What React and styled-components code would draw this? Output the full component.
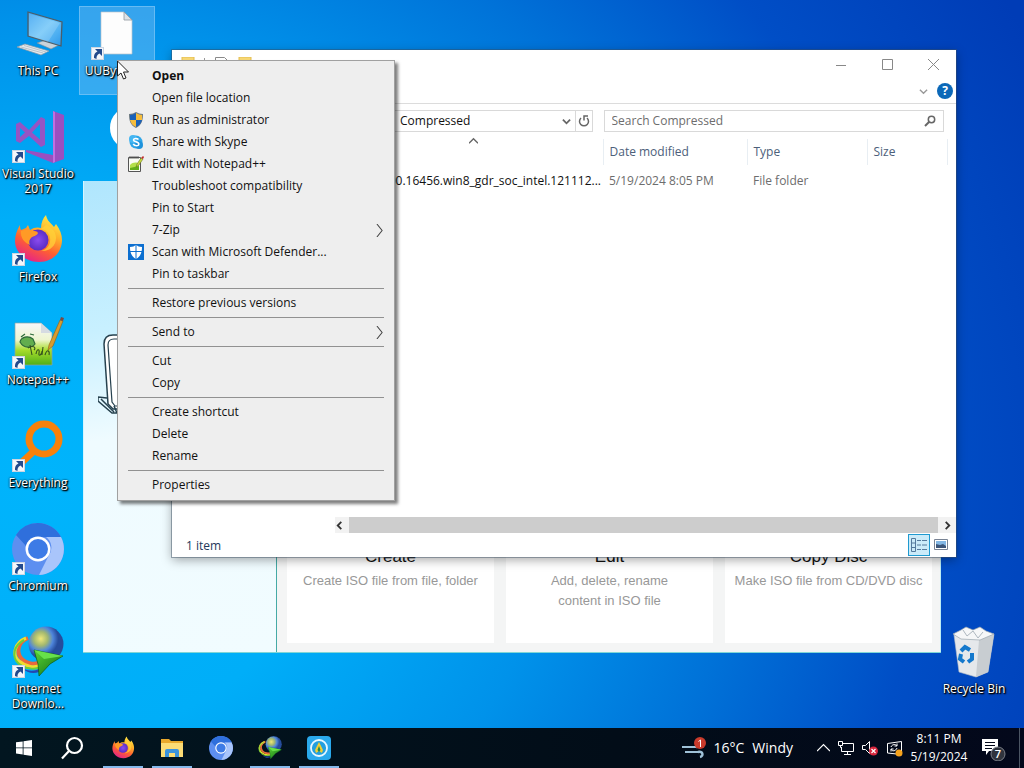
import styled, { createGlobalStyle, css } from "styled-components";

const GlobalStyle = createGlobalStyle`
  * {
    box-sizing: border-box;
  }
  body {
    margin: 0;
    overflow: hidden;
    font-family: "Open Sans", "Noto Sans", sans-serif;
    font-size: 12px;
    line-height: 16px;
    color: #111;
  }
  button {
    padding: 0;
    border: 0;
    background: none;
    font: inherit;
    color: inherit;
    cursor: default;
  }
  svg {
    display: block;
    flex: none;
  }
`;

/* ---------- icons ---------- */

const ThisPcIcon = () => (
  <svg viewBox="0 0 52 52" width="52" height="52">
    <defs>
      <linearGradient id="pcScreen" x1="0" y1="0" x2="1" y2="1">
        <stop offset="0" stopColor="#2f9df0" />
        <stop offset="0.5" stopColor="#6cc4f8" />
        <stop offset="1" stopColor="#2c98ea" />
      </linearGradient>
    </defs>
    <path d="M25 35l9-3 13 5-8 4z" fill="#c9d3da" stroke="#7d8c96" strokeWidth=".6" />
    <path d="M16 4l34 10-1 24-33-10z" fill="url(#pcScreen)" stroke="#4c5d69" strokeWidth="1.3" />
    <path d="M17 5.500l31 9.500-12 19-19-6z" fill="#fff" opacity=".18" />
    <path d="M5 39l8-3 24 7-8 4z" fill="#e3e8ec" stroke="#8a98a3" strokeWidth=".7" />
    <path d="M9 39l22 6M12 37.500l22 6.500" stroke="#a6b1b9" strokeWidth=".7" />
  </svg>
);

const PageIcon = () => (
  <svg viewBox="0 0 52 52" width="52" height="52">
    <path d="M10 4h23l8 8v34H10z" fill="#fdfdfd" stroke="#b9c3cc" strokeWidth=".7" />
    <path d="M33 4v8h8z" fill="#dfe3e6" stroke="#8f989f" strokeWidth=".8" />
  </svg>
);

const VisualStudioIcon = () => (
  <svg viewBox="0 0 52 52" width="52" height="52">
    <path d="M41 0l11 4v44l-11 4-27-11v-2l27 5z" fill="#9a4fc0" />
    <path d="M41 0l2 1v50l-2 1z" fill="#c06fe0" />
    <path
      d="M4 13l4-2 9 8L29 6l4 2v26l-4 2-12-11-9 7-4-2zM8 17v9l5-4.500zM28 13l-8 8.500 8 7z"
      fill="#9455c4"
      fillRule="evenodd"
    />
  </svg>
);

const FirefoxIcon = ({ size = 52 }) => (
  <svg viewBox="0 0 52 52" width={size} height={size}>
    <defs>
      <linearGradient id="fxBody" x1=".8" y1="0" x2=".3" y2="1">
        <stop offset="0" stopColor="#fff04a" />
        <stop offset=".35" stopColor="#ffb22a" />
        <stop offset=".65" stopColor="#ff6130" />
        <stop offset="1" stopColor="#e5218a" />
      </linearGradient>
      <radialGradient id="fxGlobe">
        <stop offset="0" stopColor="#8a4bf0" />
        <stop offset="1" stopColor="#5a2cc4" />
      </radialGradient>
    </defs>
    <path
      d="M8 11c0 3 .5 4 1 5l5-2 2-3 2 5c4-3 8-3 11-2 0-5 2-10 5-13 1 6 5 8 8 12l2-3c4 5 6 11 6 16 0 12-9 22-23 22S3 38 3 27c0-6 2-11 5-16z"
      fill="url(#fxBody)"
    />
    <circle cx="26" cy="26" r="10.500" fill="url(#fxGlobe)" />
    <path d="M9 17c4-2 8-2 11 0 3 0 5 0 6 2-1 3-5 3-7 5-3 3-1 7-1 7-5-2-10-7-9-14z" fill="#ff9a26" />
    <path d="M29 15c7 1 10 7 9 13-1 5-5 8-9 9 8 1 15-5 15-13 0-7-5-11-10-13z" fill="#ffd23a" opacity=".75" />
  </svg>
);

const NotepadIcon = ({ size = 52 }) => (
  <svg viewBox="0 0 52 52" width={size} height={size}>
    <defs>
      <linearGradient id="nppPage" x1="0" y1="0" x2="0" y2="1">
        <stop offset="0" stopColor="#f7f7fa" />
        <stop offset=".4" stopColor="#eef5cf" />
        <stop offset=".65" stopColor="#a6dc2b" />
        <stop offset="1" stopColor="#4fae18" />
      </linearGradient>
    </defs>
    <path d="M3 6h26l11 10v32H3z" fill="url(#nppPage)" stroke="#8ea3a3" strokeWidth=".7" />
    <path d="M29 6v10h11z" fill="#d6dbe2" />
    <path d="M8 25c1-5 8-7 13-3l2 5c-3 4-11 5-15-2zM9 20l4-3M18 17l4 1" fill="#62ad4e" stroke="#2d6a3a" strokeWidth="1.200" />
    <path
      d="M18 28l2 10M16 31c4-3 9-1 6 2M24 37c1-6 4-5 3-1s3 2 3-2M31 30l-1 8M33 38c2-7 5-4 4 0"
      fill="none"
      stroke="#34521f"
      strokeWidth="1.100"
    />
    <path d="M36 33l1-5L48 3l3 1-10 25z" fill="#d79b2f" stroke="#8b6018" strokeWidth=".6" />
    <path d="M48 3l1-3 3 1-1 3z" fill="#7b4a44" />
  </svg>
);

const EverythingIcon = () => (
  <svg viewBox="0 0 52 52" width="52" height="52" fill="none" stroke="#f8810b">
    <circle cx="32" cy="19" r="15" strokeWidth="7" />
    <path d="M22 31L8 44" strokeWidth="7" />
  </svg>
);

const ChromiumIcon = ({ size = 52 }) => (
  <svg viewBox="0 0 52 52" width={size} height={size}>
    <circle cx="26" cy="26" r="26" fill="#5d8ff0" />
    <path d="M26 0a26 26 0 0 1 23 14H26a13 13 0 0 0-12 9L4 12A26 26 0 0 1 26 0z" fill="#2f6fdc" />
    <path d="M49 14a26 26 0 0 1-22 38l10-20a13 13 0 0 0-3-18z" fill="#a9c5fb" />
    <circle cx="26" cy="26" r="12.500" fill="#fff" />
    <circle cx="26" cy="26" r="10" fill="#3d7be6" />
  </svg>
);

const IdmIcon = ({ size = 52 }) => (
  <svg viewBox="0 0 52 52" width={size} height={size}>
    <defs>
      <radialGradient id="idmGlobe" cx=".35" cy=".35">
        <stop offset="0" stopColor="#f0e878" />
        <stop offset=".4" stopColor="#a3b870" />
        <stop offset=".7" stopColor="#4f86dc" />
        <stop offset="1" stopColor="#264c9c" />
      </radialGradient>
      <linearGradient id="idmArrow" x1="0" y1="0" x2="1" y2="1">
        <stop offset="0" stopColor="#5cd433" />
        <stop offset="1" stopColor="#0c6b18" />
      </linearGradient>
    </defs>
    <path d="M16 12C6 16 4 26 9 32s14 7 20 4" fill="none" stroke="#e8693c" strokeWidth="4" />
    <path d="M14 12C2 17 0 29 7 35s16 7 22 4" fill="none" stroke="#f2dc2e" strokeWidth="3" />
    <path d="M12 14C1 20 0 31 6 37s17 7 23 4" fill="none" stroke="#6fce3a" strokeWidth="2" />
    <path d="M10 42c7 4 14 3 19 0l-2 4c-6 2-12 1-17-4z" fill="#2446b0" />
    <circle cx="34" cy="18" r="17.500" fill="url(#idmGlobe)" />
    <path d="M22 24l29 6-13 8-11 12-1-12z" fill="url(#idmArrow)" stroke="#0c5a18" strokeWidth=".7" />
    <path d="M22 24l29 6-19 3z" fill="#67e04a" />
  </svg>
);

const RecycleBinIcon = () => (
  <svg viewBox="0 0 52 52" width="52" height="52">
    <path d="M6 9l40-1-6 38-12 5-17-5z" fill="#e5e8eb" stroke="#b5bdc6" strokeWidth=".6" />
    <path d="M31 14l15-6-6 38-12 5z" fill="#c8cdd1" />
    <path d="M5 8l8-4 5-3 7 3 7-3 6 4 8 3-14 6-19-1z" fill="#f6f7f8" stroke="#9aa5ae" strokeWidth=".7" />
    <path d="M15 4l4 6 6-5 5 7 5-6" fill="none" stroke="#aeb7bf" />
    <path d="M13 25l4-4 5 3M24 27l0 6-4 3M16 36l-4-3 1-5" fill="none" stroke="#1478cc" strokeWidth="4" />
  </svg>
);

const IsoEditorIcon = () => (
  <svg viewBox="0 0 24 24" width="24" height="24">
    <rect width="24" height="24" rx="4" fill="#2aa9ec" />
    <circle cx="12" cy="12" r="8" fill="#239fdf" stroke="#e9f8ff" strokeWidth="1.800" />
    <path d="M12 6l4 8-1 3-3-2-3 2-1-3z" fill="#f2cf32" />
    <path d="M12 10l1.500 4-1.500 2-1.500-2z" fill="#23874c" />
  </svg>
);

const FolderIcon = () => (
  <svg viewBox="0 0 24 24" width="24" height="24">
    <path d="M1 3h8l2 2h12v16H1z" fill="#e9a92c" />
    <path d="M1 7h22v14H1z" fill="#fcdc75" />
    <path d="M5 21v-6a2 2 0 0 1 2-2h10a2 2 0 0 1 2 2v6h-4v-4H9v4z" fill="#3c93dc" />
  </svg>
);

const SmallFolderIcon = () => (
  <svg viewBox="0 0 16 16" width="16" height="16">
    <path d="M2 0h12v15H2z" fill="#f7d774" stroke="#e3bd50" />
  </svg>
);

const SmallPageIcon = () => (
  <svg viewBox="0 0 16 16" width="16" height="16">
    <path d="M2.500.500h9l3 3v11h-12z" fill="#fff" stroke="#8a8a8a" />
  </svg>
);

const ShieldIcon = () => (
  <svg viewBox="0 0 16 16" width="16" height="16">
    <path d="M8 0c2 1 4 2 7 2 0 6-1 11-7 14C2 13 1 8 1 2c3 0 5-1 7-2z" fill="#6e7b84" />
    <path d="M8 1v7H2V3c2 0 4-1 6-2z" fill="#1b62b8" />
    <path d="M8 1c2 1 4 2 6 2v5H8z" fill="#f6bd3d" />
    <path d="M2 8h6v7C4 13 3 11 2 8z" fill="#f6bd3d" />
    <path d="M14 8H8v7c4-2 5-4 6-7z" fill="#1b62b8" />
  </svg>
);

const SkypeIcon = () => (
  <svg viewBox="0 0 16 16" width="16" height="16">
    <circle cx="8" cy="8" r="6.500" fill="#2fa6e8" />
    <circle cx="5" cy="5" r="4" fill="#45b6f2" />
    <circle cx="11" cy="11" r="4" fill="#1f93dc" />
    <path
      d="M10.500 5.500C9 4 5.500 4 5.500 6S10.800 7.500 10.800 10 6.500 12 5.200 10"
      fill="none"
      stroke="#fff"
      strokeWidth="1.600"
    />
  </svg>
);

const NotepadSmallIcon = () => (
  <svg viewBox="0 0 16 16" width="16" height="16">
    <path d="M.500 1.500h12v14H.500z" fill="#fafcf5" stroke="#555" />
    <path d="M2 9c3-3 7-3 9-1v6H2z" fill="#b3e04a" />
    <path d="M2 12l9-2v4H2z" fill="#63ae1a" />
    <path d="M2 0v3M4 0v3M6 0v3M8 0v3M10 0v3" stroke="#444" strokeWidth=".8" />
    <path d="M8 11l1-3 4-6 2 1-4 6z" fill="#c9d943" stroke="#566418" strokeWidth=".5" />
    <path d="M13 2l2-2 1 1-1 2z" fill="#c02a2a" />
  </svg>
);

const DefenderIcon = () => (
  <svg viewBox="0 0 16 16" width="16" height="16">
    <path d="M0 0h16v16H0z" fill="#0c6fd0" />
    <path d="M8 1c2 1 3 2 6 2 0 5-1 9-6 12-5-3-6-7-6-12 3 0 4-1 6-2z" fill="#fff" />
    <path d="M8 1v14M2 7.500h12" stroke="#0c6fd0" />
  </svg>
);

const Chevron = ({ d, width = 9, height = 9, color = "#666", weight = 1.5 }) => (
  <svg viewBox="0 0 10 10" width={width} height={height} fill="none" stroke={color} strokeWidth={weight}>
    <path d={d} />
  </svg>
);
const DOWN = "M1 3l4 4 4-4";
const UP = "M0 7l5-5 5 5";
const LEFT = "M7 1L3 5l4 4";
const RIGHT = "M3 1l4 4-4 4";

const LaptopArt = () => (
  <svg viewBox="0 0 60 90" width="60" height="90" fill="none" stroke="#26414f">
    <path d="M60 2H15C9 2 6 5 6 11l4 60 5 5h45" fill="#fff" strokeWidth="1.500" />
    <path d="M60 6H16c-4 0-6 2-6 6l4 57 3 4h43" strokeWidth="1.200" />
    <path d="M9 65l-9-1v4l14 12h5l-3-7M3 66l13 13M20 81v5h40" strokeWidth="1.500" />
  </svg>
);

/* ---------- desktop ---------- */

const Screen = styled.div`
  display: flex;
  flex-direction: column;
  height: 100vh;
`;

const Desktop = styled.main`
  position: relative;
  flex: 1;
  min-height: 0;
  overflow: hidden;
  background: radial-gradient(
    ellipse 120% 150% at 4% 66%,
    #00b4fc 0%,
    #00aef8 24%,
    #0092ea 42%,
    #0072d8 57%,
    #004ec6 72%,
    #003cb6 90%
  );
`;

const Shortcuts = styled.div`
  display: flex;
  flex-direction: column;
  gap: 14px;
  width: 76px;
  padding-top: 6px;
`;

const DesktopIcon = styled.button`
  display: flex;
  flex-direction: column;
  align-items: center;
  width: 76px;
  height: 89px;
  padding-top: 2px;
  line-height: 15px;
  color: #fff;
  text-shadow: 1px 1px 1px #000, 1px 1px 2px #000, 0 0 2px #000;
  ${(props) =>
    props.$selected &&
    css`
      background: rgba(120, 190, 245, 0.45);
      box-shadow: inset 0 0 0 1px rgba(150, 210, 250, 0.5);
    `}
`;

const IconArt = styled.span`
  position: relative;
  display: block;
  margin-bottom: 3px;
`;

const ShortcutBadge = styled.span`
  position: absolute;
  left: 0;
  bottom: 0;
  width: 13px;
  height: 13px;
  background: #f4f6fa;
  border: 1px solid #cdd6e2;
`;

const FloatingIcon = styled.div`
  position: absolute;
  ${(props) => props.$place}
`;

const Launcher = ({ label, icon, selected, shortcut = true }) => (
  <DesktopIcon $selected={selected}>
    <IconArt>
      {icon}
      {shortcut && (
        <ShortcutBadge>
          <svg viewBox="0 0 11 11" width="11" height="11">
            <path d="M3 1h7v7L7.500 5.500C5 7 4.500 8 4.500 11L2 10c0-4 1-5.500 3.500-6.500z" fill="#234a8c" />
          </svg>
        </ShortcutBadge>
      )}
    </IconArt>
    {label}
  </DesktopIcon>
);

/* ---------- ISO editor window ---------- */

const EditorWindow = styled.section`
  position: absolute;
  inset: 95px 83px 75px 83px;
  display: flex;
  flex-direction: column;
  font-family: "Liberation Sans", Arial, sans-serif;
`;

const EditorHeader = styled.header`
  display: flex;
  align-items: center;
  height: 86px;
  padding: 0 27px 20px;
`;

const EditorLogo = styled.span`
  width: 44px;
  height: 44px;
  border: 7px solid #fff;
  border-radius: 50%;
  background: #27a58c;
`;

const EditorBody = styled.div`
  display: flex;
  flex: 1;
  border-bottom: 1px solid #7fd6d6;
`;

const EditorSide = styled.div`
  width: 194px;
  padding: 152px 14px 0;
  border-left: 1px solid #d3f5ff;
  border-right: 1px solid #45aaa6;
  background: linear-gradient(170deg, #b0e6fd 0%, #c8f0ff 30%, #effbff 52%, #f1fcff 100%);
`;

const Cards = styled.div`
  display: flex;
  flex: 1;
  gap: 12px;
  padding: 10px 8px 9px 10px;
  background: #f4f5f5;
  border-right: 1px solid #bdeef5;
`;

const Card = styled.article`
  display: flex;
  flex: 1;
  flex-direction: column;
  justify-content: flex-end;
  background: #fff;
  text-align: center;
  h2 {
    margin: 0;
    font-size: 17px;
    line-height: 24px;
    font-weight: 400;
    color: #111;
  }
  p {
    min-height: 74px;
    margin: 0;
    padding: 2px 8px 0;
    font-size: 13px;
    line-height: 20px;
    color: #989898;
  }
`;

/* ---------- explorer window ---------- */

const ExplorerWindow = styled.section`
  position: absolute;
  inset: 50px 68px 171px 172px;
  display: flex;
  flex-direction: column;
  background: #fff;
  box-shadow: 0 0 0 1px rgba(60, 80, 100, 0.45), 0 3px 10px rgba(0, 0, 0, 0.35);
`;

const TitleBar = styled.header`
  display: flex;
  justify-content: space-between;
  height: 29px;
`;

const QuickAccess = styled.div`
  display: flex;
  align-items: center;
  gap: 8px;
  padding-left: 8px;
  span {
    height: 14px;
    border-left: 1px solid #999;
  }
`;

const WindowButton = styled.button`
  display: inline-flex;
  align-items: center;
  justify-content: center;
  width: 46px;
  height: 29px;
`;

const RibbonBar = styled.div`
  display: flex;
  align-items: center;
  justify-content: flex-end;
  gap: 9px;
  height: 25px;
  padding-right: 3px;
  border-bottom: 1px solid #dcdcdc;
  button {
    display: flex;
  }
`;

const HelpButton = styled.button`
  align-items: center;
  justify-content: center;
  width: 16px;
  height: 16px;
  border-radius: 50%;
  background: #0b68b8;
  color: #fff;
  font-weight: 700;
`;

const AddressRow = styled.div`
  display: grid;
  grid-template-columns: 1fr 1fr;
  gap: 11px;
  height: 35px;
  padding: 6px 12px 6px 80px;
`;

const AddressBox = styled.div`
  display: flex;
  align-items: stretch;
  height: 22px;
  padding-left: 147px;
  border: 1px solid #d9d9d9;
  span {
    flex: 1;
    line-height: 20px;
  }
  button {
    display: flex;
    align-items: center;
    justify-content: center;
    width: 17px;
  }
  button:last-child {
    border-left: 1px solid #d9d9d9;
  }
`;

const SearchBox = styled.label`
  display: flex;
  align-items: center;
  height: 22px;
  padding: 0 7px;
  border: 1px solid #d9d9d9;
  input {
    flex: 1;
    min-width: 0;
    padding: 0;
    border: 0;
    outline: 0;
    background: none;
    font: inherit;
  }
  input::placeholder {
    color: #6d6d6d;
    opacity: 1;
  }
`;

const Panes = styled.div`
  display: flex;
  flex: 1;
  min-height: 0;
`;

const NavPane = styled.nav`
  width: 163px;
`;

const FilePane = styled.div`
  display: flex;
  flex: 1;
  flex-direction: column;
  justify-content: space-between;
`;

const FileTable = styled.table`
  width: 100%;
  table-layout: fixed;
  border-collapse: collapse;
  white-space: nowrap;
  th,
  td {
    padding: 0 6px;
    font-weight: 400;
    text-align: left;
  }
  th {
    position: relative;
    height: 26px;
    border-right: 1px solid #e8eef3;
    color: #4c607a;
  }
  th:last-child {
    border: 0;
  }
  td {
    height: 32px;
    color: #6d6d6d;
  }
  td:first-child {
    padding-right: 2px;
    text-align: right;
    color: #111;
  }
`;

const SortMark = styled.span`
  position: absolute;
  top: -2px;
  left: 50%;
`;

const ScrollBar = styled.div`
  display: flex;
  height: 16px;
  background: #f2f2f2;
  button {
    display: flex;
    align-items: center;
    justify-content: center;
    width: 18px;
  }
  button:first-child {
    justify-content: flex-start;
    width: 14px;
  }
`;

const ScrollThumb = styled.div`
  flex: 1;
  background: #cdcdcd;
`;

const StatusBar = styled.footer`
  display: flex;
  align-items: center;
  height: 24px;
  padding: 0 4px 0 14px;
  color: #1e395b;
  span {
    flex: 1;
    padding-top: 2px;
  }
`;

const ViewButton = styled.button`
  display: flex;
  align-items: center;
  justify-content: center;
  width: 22px;
  height: 22px;
  ${(props) =>
    props.$active &&
    css`
      border: 1px solid #1f9ad0;
      background: #cbebf9;
    `}
`;

/* ---------- context menu ---------- */

const Menu = styled.div`
  position: absolute;
  left: 117px;
  top: 60px;
  width: 278px;
  padding: 4px 0;
  border: 1px solid #a0a0a0;
  background: #eee;
  box-shadow: 3px 3px 3px rgba(0, 0, 0, 0.5);
`;

const MenuItem = styled.button`
  display: flex;
  align-items: center;
  width: 100%;
  height: 22px;
  padding: 0 8px 0 10px;
  font-weight: ${(props) => (props.$bold ? 700 : 400)};
  text-align: left;
`;

const MenuIcon = styled.span`
  width: 16px;
  margin-right: 8px;
`;

const MenuText = styled.span`
  flex: 1;
`;

const MenuLine = styled.hr`
  height: 1px;
  margin: 3px 10px;
  border: 0;
  background: #919191;
`;

const Cursor = styled.svg`
  position: absolute;
  left: 117px;
  top: 60px;
`;

const menuGroups = [
  [
    { label: "Open", bold: true },
    { label: "Open file location" },
    { label: "Run as administrator", icon: <ShieldIcon /> },
    { label: "Share with Skype", icon: <SkypeIcon /> },
    { label: "Edit with Notepad++", icon: <NotepadSmallIcon /> },
    { label: "Troubleshoot compatibility" },
    { label: "Pin to Start" },
    { label: "7-Zip", submenu: true },
    { label: "Scan with Microsoft Defender...", icon: <DefenderIcon /> },
    { label: "Pin to taskbar" },
  ],
  [{ label: "Restore previous versions" }],
  [{ label: "Send to", submenu: true }],
  [{ label: "Cut" }, { label: "Copy" }],
  [{ label: "Create shortcut" }, { label: "Delete" }, { label: "Rename" }],
  [{ label: "Properties" }],
];

function ContextMenu() {
  return (
    <Menu role="menu">
      {menuGroups.map((group, index) => (
        <div key={group[0].label}>
          {index > 0 && <MenuLine />}
          {group.map((item) => (
            <MenuItem key={item.label} role="menuitem" $bold={item.bold}>
              <MenuIcon>{item.icon}</MenuIcon>
              <MenuText>{item.label}</MenuText>
              {item.submenu && <Chevron d="M3 0l4 5-4 5" width={13} height={13} color="#444" weight={0.8} />}
            </MenuItem>
          ))}
        </div>
      ))}
    </Menu>
  );
}

/* ---------- taskbar ---------- */

const TaskBar = styled.footer`
  display: flex;
  justify-content: space-between;
  height: 40px;
  background: linear-gradient(90deg, #021620, #020d18 60%, #03081b);
  color: #fff;
`;

const TaskGroup = styled.div`
  display: flex;
  align-items: stretch;
`;

const RunningApps = styled.div`
  display: flex;
  gap: 9px;
  padding-left: 7px;
`;

const TaskButton = styled.button`
  display: flex;
  align-items: center;
  justify-content: center;
  width: 48px;
`;

const AppButton = styled(TaskButton)`
  width: 40px;
  border-bottom: 2px solid ${(props) => (props.$running ? "#86b9ec" : "transparent")};
  padding-top: 2px;
`;

const Weather = styled.button`
  display: flex;
  align-items: center;
  gap: 8px;
  margin-right: 24px;
  font-size: 14px;
`;

const TrayIcons = styled.div`
  display: flex;
  align-items: center;
  gap: 8px;
  button {
    display: flex;
  }
`;

const Clock = styled.button`
  width: 72px;
  line-height: 18px;
`;

const ActionCenter = styled.button`
  display: flex;
  align-items: center;
  padding: 0 12px 0 7px;
  border-right: 1px solid #4b5563;
  margin-right: 4px;
`;

const launchers = [
  { label: "This PC", icon: <ThisPcIcon />, shortcut: false },
  { label: "Visual Studio 2017", icon: <VisualStudioIcon /> },
  { label: "Firefox", icon: <FirefoxIcon /> },
  { label: "Notepad++", icon: <NotepadIcon /> },
  { label: "Everything", icon: <EverythingIcon /> },
  { label: "Chromium", icon: <ChromiumIcon /> },
  { label: "Internet Downlo...", icon: <IdmIcon /> },
];

const tasks = [
  { name: "Firefox", icon: <FirefoxIcon size={24} />, running: true },
  { name: "File Explorer", icon: <FolderIcon />, running: true },
  { name: "Chromium", icon: <ChromiumIcon size={24} /> },
  { name: "Internet Download Manager", icon: <IdmIcon size={24} />, running: true },
  { name: "ISO Editor", icon: <IsoEditorIcon />, running: true },
];

function Editor() {
  return (
    <EditorWindow>
      <EditorHeader>
        <EditorLogo />
      </EditorHeader>
      <EditorBody>
        <EditorSide>
          <LaptopArt />
        </EditorSide>
        <Cards>
          <Card>
            <h2>Create</h2>
            <p>Create ISO file from file, folder</p>
          </Card>
          <Card>
            <h2>Edit</h2>
            <p>
              Add, delete, rename
              <br />
              content in ISO file
            </p>
          </Card>
          <Card>
            <h2>Copy Disc</h2>
            <p>Make ISO file from CD/DVD disc</p>
          </Card>
        </Cards>
      </EditorBody>
    </EditorWindow>
  );
}

function Explorer() {
  return (
    <ExplorerWindow>
      <TitleBar>
        <QuickAccess>
          <SmallFolderIcon />
          <span />
          <SmallPageIcon />
          <SmallFolderIcon />
        </QuickAccess>
        <div>
          <WindowButton aria-label="Minimize">
            <svg width="11" height="11" stroke="#888">
              <path d="M0 6.500h10" />
            </svg>
          </WindowButton>
          <WindowButton aria-label="Maximize">
            <svg width="11" height="11" fill="none" stroke="#888">
              <path d="M.500.500h10v10H.500z" />
            </svg>
          </WindowButton>
          <WindowButton aria-label="Close">
            <svg width="11" height="11" stroke="#888">
              <path d="M0 0l11 11M11 0L0 11" />
            </svg>
          </WindowButton>
        </div>
      </TitleBar>
      <RibbonBar>
        <button aria-label="Expand the ribbon">
          <Chevron d={DOWN} color="#999" />
        </button>
        <HelpButton>?</HelpButton>
      </RibbonBar>
      <AddressRow>
        <AddressBox>
          <span>Compressed</span>
          <button aria-label="Previous locations">
            <Chevron d={DOWN} weight={2} />
          </button>
          <button aria-label="Refresh">
            <svg viewBox="0 0 12 12" width="12" height="12" fill="none" stroke="#666" strokeWidth="1.500">
              <path d="M3 3a4.500 4.500 0 1 0 6 0M6 5.500V1h4" />
            </svg>
          </button>
        </AddressBox>
        <SearchBox>
          <input type="text" placeholder="Search Compressed" aria-label="Search Compressed" />
          <svg viewBox="0 0 12 12" width="12" height="12" fill="none" stroke="#666">
            <circle cx="7.500" cy="4.500" r="3.200" strokeWidth="1.500" />
            <path d="M5 7L1 11" strokeWidth="2" />
          </svg>
        </SearchBox>
      </AddressRow>
      <Panes>
        <NavPane />
        <FilePane>
          <FileTable>
            <colgroup>
              <col />
              <col width="144" />
              <col width="120" />
              <col width="80" />
              <col width="9" />
            </colgroup>
            <thead>
              <tr>
                <th>
                  Name
                  <SortMark>
                    <Chevron d={UP} />
                  </SortMark>
                </th>
                <th>Date modified</th>
                <th>Type</th>
                <th>Size</th>
                <th />
              </tr>
            </thead>
            <tbody>
              <tr>
                <td>200.16456.win8_gdr_soc_intel.121112...</td>
                <td>5/19/2024 8:05 PM</td>
                <td>File folder</td>
                <td />
                <td />
              </tr>
            </tbody>
          </FileTable>
          <ScrollBar>
            <button aria-label="Scroll left">
              <Chevron d={LEFT} color="#333" weight={2} />
            </button>
            <ScrollThumb />
            <button aria-label="Scroll right">
              <Chevron d={RIGHT} color="#333" weight={2} />
            </button>
          </ScrollBar>
        </FilePane>
      </Panes>
      <StatusBar>
        <span>1 item</span>
        <ViewButton $active aria-label="Details view">
          <svg viewBox="0 0 16 14" width="16" height="14" fill="none" stroke="#557a9c">
            <path d="M.500.500h4v13h-4zM.500 5h4M.500 9.500h4" />
            <path d="M6 2.500h4M11 2.500h5M6 7h4M11 7h5M6 11.500h4M11 11.500h5" />
          </svg>
        </ViewButton>
        <ViewButton aria-label="Large icons view">
          <svg viewBox="0 0 14 12" width="14" height="12">
            <path d="M.500.500h13v10H.500z" fill="#fff" stroke="#788394" />
            <path d="M2 2h10v7H2z" fill="#83b7e4" />
            <path d="M2 5l4 1 3-1 3 2v2H2z" fill="#3c5578" />
          </svg>
        </ViewButton>
      </StatusBar>
    </ExplorerWindow>
  );
}

function Tray() {
  return (
    <TaskGroup>
      <Weather>
        <svg viewBox="0 0 24 22" width="24" height="22">
          <path d="M0 10h15M3 15h15" stroke="#9fc2d8" strokeWidth="2" />
          <path d="M14 10c5 0 5-5 2-5M16 15c5-1 6 4 2 5" fill="none" stroke="#9fc2d8" strokeWidth="2.500" />
          <circle cx="18" cy="6" r="6" fill="#c93b2c" />
          <path d="M16.500 4.500L18.500 3v7" fill="none" stroke="#fff" />
        </svg>
        <span>16°C</span>
        <span>Windy</span>
      </Weather>
      <TrayIcons>
        <button aria-label="Show hidden icons">
          <Chevron d="M0 7l5-5 5 5" width={13} height={13} color="#fff" weight={1} />
        </button>
        <button aria-label="Network">
          <svg viewBox="0 0 16 16" width="16" height="16" fill="none" stroke="#fff">
            <path d="M5 3.500h10.500v8H3.500V7M9.500 11.500v3M6 14.500h7M.500 1.500h4v4h-4zM2.500 5.500v2h1" />
          </svg>
        </button>
        <button aria-label="Volume">
          <svg viewBox="0 0 16 16" width="16" height="16">
            <path d="M.500 5.500h3l4-4v12l-4-4h-3z" fill="none" stroke="#fff" />
            <circle cx="11.500" cy="11" r="4.500" fill="#d7263d" />
            <path d="M9.500 9l4 4M13.500 9l-4 4" stroke="#fff" strokeWidth="1.200" />
          </svg>
        </button>
        <button aria-label="Windows Update">
          <svg viewBox="0 0 17 17" width="17" height="17">
            <path d="M1.500 3.500l14-2v13l-14-1.500z" fill="none" stroke="#fff" />
            <path d="M5 7c1-3 5-3 6-1M11 3.500V6H8.500M11 8c-1 3-5 4-6 1M5 11.500V9h2.500" fill="none" stroke="#fff" />
            <circle cx="13" cy="13" r="3.500" fill="#f6a21c" />
          </svg>
        </button>
      </TrayIcons>
      <Clock>
        8:11 PM
        <br />
        5/19/2024
      </Clock>
      <ActionCenter aria-label="7 new notifications">
        <svg viewBox="0 0 25 26" width="25" height="26">
          <path d="M0 4h16v12H7l-3 4v-4H0z" fill="#fff" />
          <path d="M3 7.500h10M3 10.500h10M3 13.500h7" stroke="#03081b" />
          <circle cx="16" cy="19" r="7" fill="#30343d" stroke="#7a7e87" />
          <text x="16" y="23" textAnchor="middle" fontSize="11" fontWeight="600" fill="#fff">
            7
          </text>
        </svg>
      </ActionCenter>
    </TaskGroup>
  );
}

function App() {
  return (
    <Screen>
      <GlobalStyle />
      <Desktop>
        <Shortcuts>
          {launchers.map((item) => (
            <Launcher key={item.label} {...item} />
          ))}
        </Shortcuts>
        <FloatingIcon $place="left: 79px; top: 6px;">
          <Launcher label="UUByte ISO" icon={<PageIcon />} selected />
        </FloatingIcon>
        <FloatingIcon $place="right: 12px; bottom: 15px;">
          <Launcher label="Recycle Bin" icon={<RecycleBinIcon />} shortcut={false} />
        </FloatingIcon>
        <Editor />
        <Explorer />
        <ContextMenu />
        <Cursor viewBox="0 0 14 21" width="14" height="21">
          <path d="M.500 1v15l3.500-3 2.500 6 2.500-1-2.500-6h5z" fill="#fff" stroke="#222" />
        </Cursor>
      </Desktop>
      <TaskBar>
        <TaskGroup>
          <TaskButton aria-label="Start">
            <svg viewBox="0 0 16 16" width="16" height="16" fill="#fff">
              <path d="M0 2.300L6.700 1.400v6.100H0zM7.500 1.300L16 0v7.500H7.500zM0 8.300h6.700v6.200L0 13.600zM7.500 8.300H16V16l-8.500-1.300z" />
            </svg>
          </TaskButton>
          <TaskButton aria-label="Search">
            <svg viewBox="0 0 24 24" width="24" height="24" fill="none" stroke="#fff" strokeWidth="2.200">
              <circle cx="14.500" cy="9.500" r="7.500" />
              <path d="M9 15l-7 7.500" />
            </svg>
          </TaskButton>
          <RunningApps>
            {tasks.map((task) => (
              <AppButton key={task.name} aria-label={task.name} $running={task.running}>
                {task.icon}
              </AppButton>
            ))}
          </RunningApps>
        </TaskGroup>
        <Tray />
      </TaskBar>
    </Screen>
  );
}

export default App;
